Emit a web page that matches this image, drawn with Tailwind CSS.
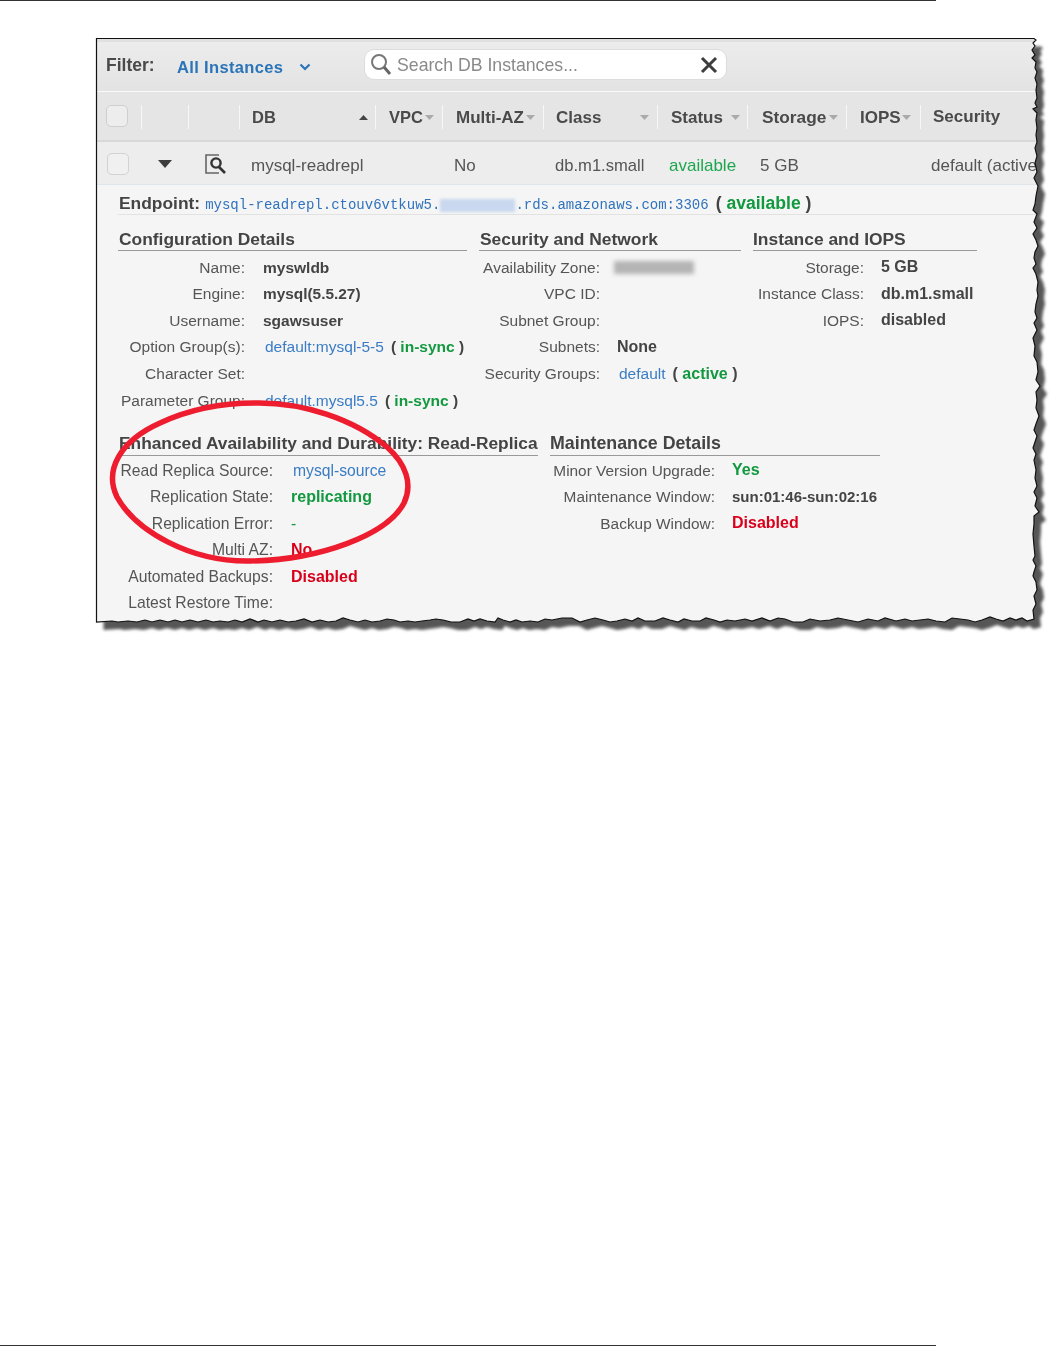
<!DOCTYPE html>
<html>
<head>
<meta charset="utf-8">
<script src="https://cdn.jsdelivr.net/npm/@tailwindcss/browser@4"></script>
</head>
<body class="bg-white">
<div class="relative w-[1051px] h-[1347px] overflow-hidden flex flex-col bg-white font-['Liberation_Sans',Arial,sans-serif] text-[15.5px] text-[#555]">
  <div class="h-px w-[936px] bg-[#333] shrink-0"></div>

  <div class="ml-[97px] mt-[38px] w-[944px] h-[584px] shrink-0 bg-[#f5f5f5] flex flex-col overflow-hidden blur-[0.45px]">
    <!-- toolbar -->
    <div class="h-[52px] shrink-0 flex items-center pl-[9px] bg-gradient-to-b from-[#ececec] to-[#e3e3e3] border-t-[3px] border-[#e0e0e0]">
      <span class="font-bold text-[17.5px] text-[#4a4a4a] w-[71px] -mt-[2px]">Filter:</span>
      <span class="font-bold text-[16.5px] text-[#2a74b8] w-[122px] tracking-[0.35px] mt-[1px]">All Instances</span>
      <svg width="12" height="8" viewBox="0 0 12 8" class="mr-[53px] mt-[1px]"><path d="M1.5 1.5 6 6l4.5-4.5" fill="none" stroke="#2a74b8" stroke-width="2.2"/></svg>
      <div class="w-[363px] h-[31px] -mt-[5px] rounded-[10px] bg-white border border-[#dcdcdc] flex items-center pl-[5px] pr-[6px]">
        <svg width="22" height="24" viewBox="0 0 22 24" class="shrink-0"><circle cx="9" cy="10" r="7" fill="none" stroke="#777" stroke-width="2"/><path d="M14 15l6 7" stroke="#666" stroke-width="3"/></svg>
        <span class="ml-[5px] text-[17.7px] text-[#8a8a8a] flex-1 translate-y-[1px]">Search DB Instances...</span>
        <svg width="20" height="20" viewBox="0 0 20 20" class="mr-[1px] shrink-0 mt-[1px]"><path d="M3 3l14 14M17 3 3 17" stroke="#3d3d3d" stroke-width="3"/></svg>
      </div>
    </div>
    <div class="h-px shrink-0 bg-[#fafafa]"></div>
    <!-- table header -->
    <div class="h-[50px] shrink-0 flex items-center pt-[2px] bg-[#e5e5e5] border-b-2 border-[#d8d8d8] font-bold text-[17px] text-[#4a4a4a]">
      <div class="w-[44px] h-[24px] pl-[9px]"><div class="w-[22px] h-[22px] rounded-[5px] bg-[#ededed] border border-[#cfcfcf]"></div></div>
      <div class="w-[47px] h-[24px] border-l border-[#f7f7f7]"></div>
      <div class="w-[51px] h-[24px] border-l border-[#f7f7f7]"></div>
      <div class="w-[136px] h-[24px] border-l border-[#f7f7f7] flex items-center justify-between pl-[12px] pr-[7px]"><span class="text-[16.5px]">DB</span><svg width="9" height="5" viewBox="0 0 9 5"><path d="M0 5 4.5 0 9 5Z" fill="#444"/></svg></div>
      <div class="w-[67px] h-[24px] border-l border-[#f7f7f7] flex items-center justify-between pl-[13px] pr-[8px]"><span class="text-[16.5px]">VPC</span><svg width="9" height="5" viewBox="0 0 9 5"><path d="M0 0 4.5 5 9 0Z" fill="#aaa"/></svg></div>
      <div class="w-[101px] h-[24px] border-l border-[#f7f7f7] flex items-center justify-between pl-[13px] pr-[8px]"><span class="mt-[2px]">Multi-AZ</span><svg width="9" height="5" viewBox="0 0 9 5"><path d="M0 0 4.5 5 9 0Z" fill="#aaa"/></svg></div>
      <div class="w-[114px] h-[24px] border-l border-[#f7f7f7] flex items-center justify-between pl-[12px] pr-[8px]"><span class="mt-[2px]">Class</span><svg width="9" height="5" viewBox="0 0 9 5"><path d="M0 0 4.5 5 9 0Z" fill="#aaa"/></svg></div>
      <div class="w-[90px] h-[24px] border-l border-[#f7f7f7] flex items-center justify-between pl-[13px] pr-[7px]"><span class="mt-[2px]">Status</span><svg width="9" height="5" viewBox="0 0 9 5"><path d="M0 0 4.5 5 9 0Z" fill="#aaa"/></svg></div>
      <div class="w-[99px] h-[24px] border-l border-[#f7f7f7] flex items-center justify-between pl-[14px] pr-[8px]"><span class="text-[17.3px] mt-[2px]">Storage</span><svg width="9" height="5" viewBox="0 0 9 5"><path d="M0 0 4.5 5 9 0Z" fill="#aaa"/></svg></div>
      <div class="w-[74px] h-[24px] border-l border-[#f7f7f7] flex items-center justify-between pl-[13px] pr-[9px]"><span class="mt-[2px]">IOPS</span><svg width="9" height="5" viewBox="0 0 9 5"><path d="M0 0 4.5 5 9 0Z" fill="#aaa"/></svg></div>
      <div class="h-[24px] border-l border-[#f7f7f7] flex items-center pl-[12px]"><span>Security</span></div>
    </div>
    <!-- data row -->
    <div class="h-[43px] shrink-0 flex items-center pt-[2px] bg-[#ededed] border-b border-[#dfe5e9] text-[17px] text-[#555] whitespace-nowrap">
      <div class="w-[61px] pl-[10px]"><div class="w-[22px] h-[22px] rounded-[5px] bg-[#f0f0f0] border border-[#d2d2d2]"></div></div>
      <div class="w-[47px]"><svg width="14" height="8" viewBox="0 0 14 8"><path d="M0 0h14L7 8Z" fill="#3d3d3d"/></svg></div>
      <div class="w-[46px]"><svg width="21" height="20" viewBox="0 0 21 20"><path d="M14 1H1v18h13" fill="none" stroke="#666" stroke-width="1.600"/><circle cx="11" cy="9" r="4.600" fill="none" stroke="#333" stroke-width="2.400"/><path d="M14 13l6 6" stroke="#333" stroke-width="2.600"/></svg></div>
      <div class="w-[203px] translate-y-[2px]">mysql-readrepl</div>
      <div class="w-[101px] translate-y-[2px]">No</div>
      <div class="w-[114px] text-[16.600px] translate-y-[2px]">db.m1.small</div>
      <div class="w-[91px] text-[#1ea64e] translate-y-[2px]">available</div>
      <div class="w-[171px] translate-y-[2px]">5 GB</div>
      <div class="translate-y-[2px]">default (active</div>
    </div>
    <!-- details -->
    <div class="flex-1 pl-[21px] flex flex-col">
      <div class="h-[30px] shrink-0 pt-[8px] pl-px border-b border-[#e2e2e2] flex items-center whitespace-nowrap">
        <span class="font-bold text-[17.400px] text-[#444] mr-[5px]">Endpoint:</span>
        <span class="font-['Liberation_Mono',monospace] text-[14px] text-[#2f72bd] translate-y-[2px]">mysql-readrepl.ctouv6vtkuw5.</span>
        <span class="w-[75px] h-[13px] bg-[#c9d8ee] blur-[1.5px] translate-y-[2px]"></span>
        <span class="font-['Liberation_Mono',monospace] text-[14px] text-[#2f72bd] translate-y-[2px]">.rds.amazonaws.com:3306</span>
        <span class="font-bold text-[17.600px] text-[#444] ml-[7px]">( <span class="text-[#12993f]">available</span> )</span>
      </div>

      <div class="flex gap-[12px] mt-[13px] h-[185px] shrink-0">
        <section class="w-[349px]">
          <h3 class="h-[23px] pl-px border-b border-[#999] font-bold text-[17.400px] leading-[22px] text-[#444]">Configuration Details</h3>
          <div class="pt-[3px] grid grid-cols-[127px_1fr] gap-x-[18px] auto-rows-[26.6px] items-center whitespace-nowrap">
            <div class="text-right">Name:</div><div class="font-bold text-[#444]">myswldb</div>
            <div class="text-right">Engine:</div><div class="font-bold text-[15.400px] text-[#444]">mysql(5.5.27)</div>
            <div class="text-right">Username:</div><div class="font-bold text-[#444]">sgawsuser</div>
            <div class="text-right">Option Group(s):</div><div class="pl-[2px]"><span class="text-[#3a7cc4]">default:mysql-5-5</span><span class="font-bold text-[#444] ml-[7px]">( <span class="text-[#12993f]">in-sync</span> )</span></div>
            <div class="text-right">Character Set:</div><div></div>
            <div class="text-right">Parameter Group:</div><div class="pl-[2px]"><span class="text-[#3a7cc4]">default.mysql5.5</span><span class="font-bold text-[#444] ml-[7px]">( <span class="text-[#12993f]">in-sync</span> )</span></div>
          </div>
        </section>
        <section class="w-[262px]">
          <h3 class="h-[23px] pl-px border-b border-[#999] font-bold text-[17.400px] leading-[22px] text-[#444]">Security and Network</h3>
          <div class="pt-[3px] grid grid-cols-[121px_1fr] gap-x-[17px] auto-rows-[26.6px] items-center whitespace-nowrap">
            <div class="text-right">Availability Zone:</div><div><div class="w-[80px] h-[13px] -ml-[3px] bg-[#b4b4b4] blur-[2px]"></div></div>
            <div class="text-right">VPC ID:</div><div></div>
            <div class="text-right">Subnet Group:</div><div></div>
            <div class="text-right">Subnets:</div><div class="font-bold text-[16px] text-[#444]">None</div>
            <div class="text-right">Security Groups:</div><div class="pl-[2px]"><span class="text-[#3a7cc4]">default</span><span class="font-bold text-[16px] text-[#444] ml-[7px]">( <span class="text-[#12993f]">active</span> )</span></div>
          </div>
        </section>
        <section class="w-[224px]">
          <h3 class="h-[23px] border-b border-[#999] font-bold text-[17.400px] leading-[22px] text-[#444]">Instance and IOPS</h3>
          <div class="pt-[3px] grid grid-cols-[111px_1fr] gap-x-[17px] auto-rows-[26.6px] items-center whitespace-nowrap font-bold text-[16px]">
            <div class="text-right font-normal text-[15.500px]">Storage:</div><div class="text-[#444]">5 GB</div>
            <div class="text-right font-normal text-[15.500px]">Instance Class:</div><div class="text-[#444]">db.m1.small</div>
            <div class="text-right font-normal text-[15.500px]">IOPS:</div><div class="text-[#444]">disabled</div>
          </div>
        </section>
      </div>

      <div class="flex gap-[12px] mt-[19px]">
        <section class="w-[420px]">
          <h3 class="h-[24px] pl-px border-b border-[#999] font-bold text-[17.330px] leading-[22px] text-[#444] whitespace-nowrap">Enhanced Availability and Durability: Read-Replica</h3>
          <div class="pt-[1px] grid grid-cols-[155px_1fr] gap-x-[18px] auto-rows-[26.6px] items-center whitespace-nowrap text-[15.700px]">
            <div class="text-right">Read Replica Source:</div><div class="pl-[2px] text-[#3a7cc4]">mysql-source</div>
            <div class="text-right">Replication State:</div><div class="font-bold text-[16px] text-[#12993f]">replicating</div>
            <div class="text-right">Replication Error:</div><div class="text-[#12993f]">-</div>
            <div class="text-right">Multi AZ:</div><div class="font-bold text-[16px] text-[#d9001b]">No</div>
            <div class="text-right">Automated Backups:</div><div class="font-bold text-[16px] text-[#d9001b]">Disabled</div>
            <div class="text-right">Latest Restore Time:</div><div></div>
          </div>
        </section>
        <section class="w-[330px]">
          <h3 class="h-[24px] border-b border-[#999] font-bold text-[17.800px] leading-[22px] text-[#444]">Maintenance Details</h3>
          <div class="pt-[1px] grid grid-cols-[165px_1fr] gap-x-[17px] auto-rows-[26.6px] items-center whitespace-nowrap">
            <div class="text-right text-[15.400px]">Minor Version Upgrade:</div><div class="font-bold text-[16px] text-[#12993f]">Yes</div>
            <div class="text-right text-[15.400px]">Maintenance Window:</div><div class="font-bold text-[15px] text-[#444]">sun:01:46-sun:02:16</div>
            <div class="text-right text-[15.400px]">Backup Window:</div><div class="font-bold text-[16px] text-[#d9001b]">Disabled</div>
          </div>
        </section>
      </div>
    </div>
  </div>

  <div class="mt-auto mb-px h-px w-[936px] bg-[#333] shrink-0"></div>

  <!-- torn edge, drop shadow and hand-drawn annotation over the screenshot -->
  <svg class="absolute left-0 top-0" width="1051" height="660" viewBox="0 0 1051 660">
    <defs>
      <path id="edge" d="M96.500 38.500 H1034 L1036 40 L1033 43 L1035 46 L1032 50 L1035 55 L1032 58 L1036 62 L1035 68 L1037 72 L1035 78 L1037 84 L1036 90 L1037 98 L1035 103 L1037 107 L1033 109 L1037 113 L1036 120 L1037 128 L1036 135 L1037 142 L1035 148 L1037 156 L1035 163 L1037 172 L1034 178 L1038 186 L1036 196 L1035 204 L1033 210 L1037 214 L1034 222 L1037 228 L1033 234 L1036 240 L1038 246 L1035 252 L1034 258 L1036 264 L1033 268 L1036 274 L1038 282 L1037 290 L1038 296 L1036 304 L1035 312 L1037 318 L1034 323 L1037 330 L1033 338 L1035 346 L1034 356 L1037 362 L1038 372 L1036 380 L1040 386 L1036 392 L1037 400 L1036 408 L1039 416 L1036 424 L1034 430 L1037 436 L1035 442 L1033 448 L1036 454 L1034 460 L1036 470 L1035 478 L1037 486 L1034 492 L1037 498 L1035 506 L1039 512 L1034 516 L1034 524 L1033 534 L1034 546 L1035 556 L1033 560 L1036 566 L1034 572 L1033 576 L1036 582 L1037 590 L1034 596 L1036 604 L1033 610 L1034 619 L1027 621 L1022 618 L1016 620 L1010 618 L1003 621 L996 619 L990 617 L982 620 L975 622 L968 620 L960 619 L952 618 L945 622 L936 621 L928 619 L920 620 L912 621 L905 619 L896 621 L885 618 L878 621 L868 619 L858 622 L848 620 L838 618 L830 620 L820 621 L810 619 L803 622 L793 622 L785 619 L778 618 L770 621 L762 618 L752 621 L745 619 L735 621 L727 620 L720 622 L714 620 L706 618 L700 621 L692 621 L684 619 L678 622 L670 620 L663 618 L655 621 L645 621 L638 618 L632 621 L625 619 L617 621 L610 622 L603 620 L595 618 L587 620 L580 622 L572 618 L562 618 L552 620 L545 619 L538 622 L530 621 L522 622 L516 620 L510 622 L503 620 L498 618 L495 622 L487 621 L480 619 L474 621 L468 619 L460 622 L451 622 L443 620 L436 619 L430 620 L422 621 L415 622 L408 621 L400 622 L394 620 L387 619 L380 621 L372 622 L365 620 L358 622 L350 620 L343 618 L336 621 L328 622 L320 620 L312 622 L304 619 L296 621 L288 622 L280 620 L272 622 L264 620 L258 622 L250 619 L242 622 L235 620 L228 622 L220 621 L213 622 L206 620 L198 622 L190 620 L182 622 L175 620 L168 622 L160 620 L152 622 L145 620 L137 622 L128 621 L118 622 L112 621 L96.500 622 Z"/>
      <filter id="soft" x="-5%" y="-5%" width="110%" height="110%"><feGaussianBlur stdDeviation="1.800"/></filter>
      <mask id="outside" maskUnits="userSpaceOnUse" x="0" y="0" width="1051" height="660">
        <rect width="1051" height="660" fill="white"/>
        <use href="#edge" fill="black"/>
      </mask>
    </defs>
    <g mask="url(#outside)">
      <rect x="97" y="30" width="954" height="630" fill="white"/>
      <use href="#edge" transform="translate(7 8)" fill="#575757" filter="url(#soft)"/>
    </g>
    <use href="#edge" fill="none" stroke="#111" stroke-width="1.200"/>
    <path d="M255 403 C302 402 354 419 387 447 C406 464 413 484 404 503 C387 535 320 560 250 561 C190 562 136 531 117 497 C104 470 120 441 160 423 C190 409 220 403 255 403 Z" fill="none" stroke="#ed1c2e" stroke-width="5.500"/>
  </svg>
</div>
</body>
</html>
